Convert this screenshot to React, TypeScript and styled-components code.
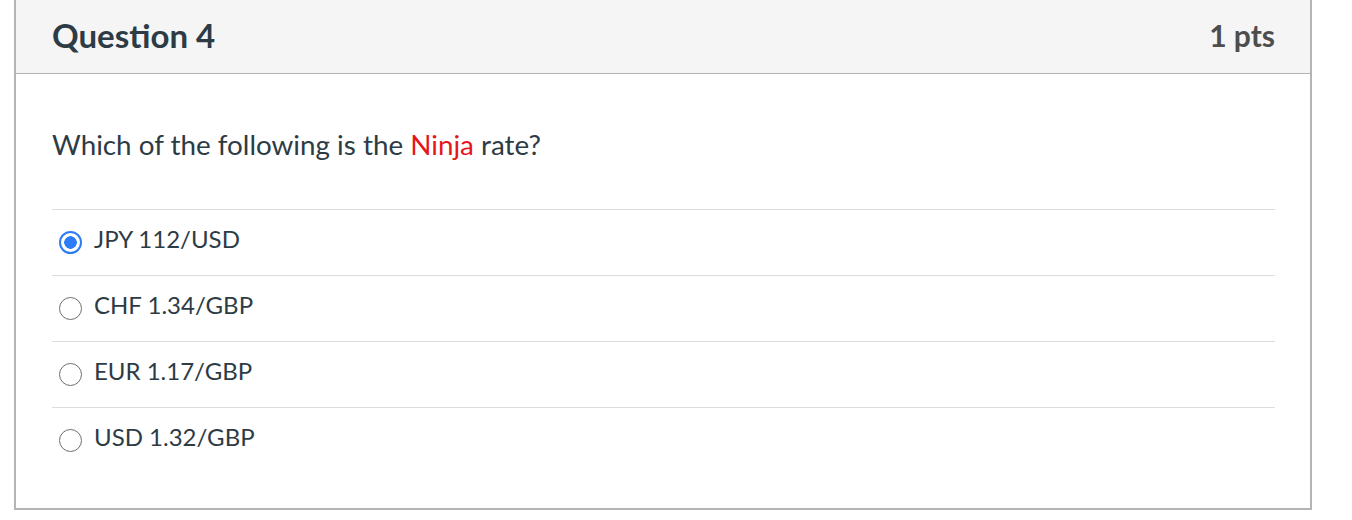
import React from "react";
import styled, { createGlobalStyle } from "styled-components";

const GlobalStyle = createGlobalStyle`
  html, body {
    margin: 0;
    padding: 0;
    background: #ffffff;
    font-family: Lato, "Open Sans", "Liberation Sans", sans-serif;
    color: #2d3b45;
  }
`;

interface IOption {
  id: number;
  label: string;
  selected?: boolean;
}

const options: IOption[] = [
  { id: 1, label: "JPY 112/USD", selected: true },
  { id: 2, label: "CHF 1.34/GBP" },
  { id: 3, label: "EUR 1.17/GBP" },
  { id: 4, label: "USD 1.32/GBP" },
];

const Page = styled.div`
  padding: 0 0 0 14px;
`;

const Card = styled.div`
  width: 1298px;
  box-sizing: border-box;
  border: 2px solid #b4b4b4;
  border-top: none;
  background: #fff;
`;

const Header = styled.div`
  height: 74px;
  box-sizing: border-box;
  padding: 0 35px 3px 36px;
  display: flex;
  align-items: center;
  justify-content: space-between;
  background: #f5f5f5;
  border-bottom: 1px solid #b4b4b4;
`;

const Title = styled.h2`
  margin: 0;
  font-size: 33px;
  font-weight: 700;
  color: #2d3b45;
`;

const Points = styled.div`
  font-size: 30px;
  font-weight: 700;
  color: #4d4d4d;
`;

const Body = styled.div`
  padding: 53px 35px 35px 36px;
`;

const QuestionText = styled.p`
  margin: 0 0 46px;
  font-size: 27.8px;
  line-height: 36px;
`;

const Highlight = styled.span`
  color: #e5161c;
`;

const Answers = styled.div`
  display: flex;
  flex-direction: column;
`;

const AnswerRow = styled.label`
  display: flex;
  align-items: flex-start;
  gap: 12px;
  height: 66px;
  box-sizing: border-box;
  padding: 16px 0 0 7px;
  border-top: 1px solid #dcdcdc;
`;

const Radio = styled.span<{ $checked?: boolean }>`
  width: 23px;
  height: 23px;
  margin-top: 5px;
  box-sizing: border-box;
  border-radius: 50%;
  flex-shrink: 0;
  border: ${(p) => (p.$checked ? "2.5px solid #2b7cf6" : "1.5px solid #6e6e6e")};
  background: ${(p) =>
    p.$checked
      ? "radial-gradient(circle, #2b7cf6 0 6px, #fff 6.5px)"
      : "#fff"};
`;

const AnswerLabel = styled.span`
  font-size: 24px;
  line-height: 26px;
  color: #2d3b45;
`;

const App = () => {
  return (
    <>
      <GlobalStyle />
      <Page>
        <Card>
          <Header>
            <Title>Question 4</Title>
            <Points>1 pts</Points>
          </Header>
          <Body>
            <QuestionText>
              Which of the following is the <Highlight>Ninja</Highlight> rate?
            </QuestionText>
            <Answers>
              {options.map(({ id, label, selected }) => (
                <AnswerRow key={id}>
                  <Radio $checked={selected} />
                  <AnswerLabel>{label}</AnswerLabel>
                </AnswerRow>
              ))}
            </Answers>
          </Body>
        </Card>
      </Page>
    </>
  );
};

export default App;
